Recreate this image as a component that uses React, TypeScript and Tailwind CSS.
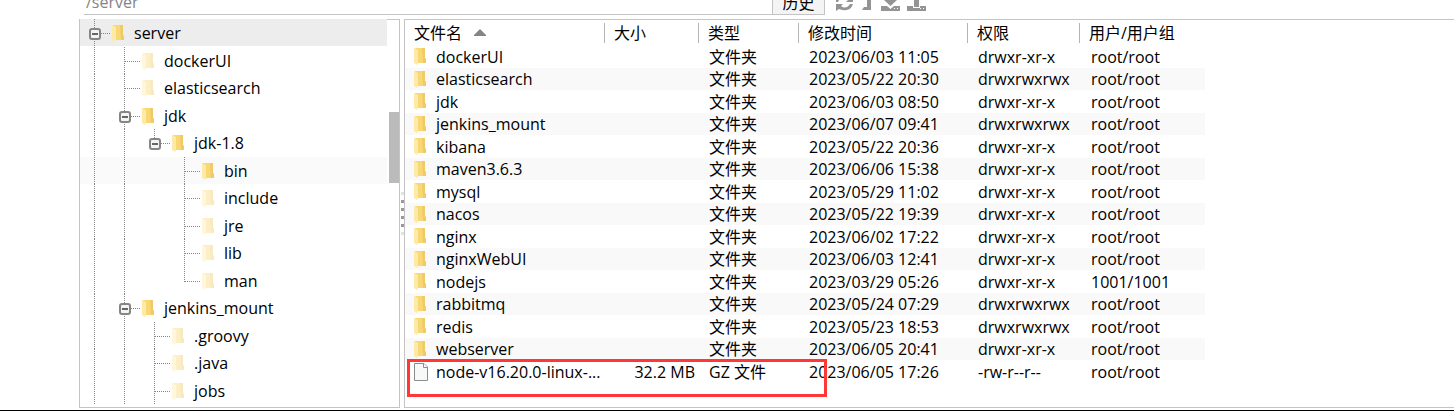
import React from "react";

type Node = {
  name: string;
  guides: boolean[];
  last?: boolean;
  open?: boolean;
  faded?: boolean;
  selected?: "root" | "item";
};

const tree: Node[] = [
  { name: "server", guides: [], open: true, selected: "root" },
  { name: "dockerUI", guides: [true], faded: true },
  { name: "elasticsearch", guides: [true], faded: true },
  { name: "jdk", guides: [true], open: true },
  { name: "jdk-1.8", guides: [true, true], open: true, last: true },
  { name: "bin", guides: [true, true, false], selected: "item" },
  { name: "include", guides: [true, true, false], faded: true },
  { name: "jre", guides: [true, true, false], faded: true },
  { name: "lib", guides: [true, true, false], faded: true },
  { name: "man", guides: [true, true, false], faded: true, last: true },
  { name: "jenkins_mount", guides: [true], open: true },
  { name: ".groovy", guides: [true, true], faded: true },
  { name: ".java", guides: [true, true], faded: true },
  { name: "jobs", guides: [true, true], faded: true },
];

type Entry = { name: string; size?: string; type: string; time: string; perm: string; owner: string };

const dir = (name: string, time: string, perm = "drwxr-xr-x", owner = "root/root"): Entry => ({
  name,
  type: "文件夹",
  time,
  perm,
  owner,
});

const entries: Entry[] = [
  dir("dockerUI", "2023/06/03 11:05"),
  dir("elasticsearch", "2023/05/22 20:30", "drwxrwxrwx"),
  dir("jdk", "2023/06/03 08:50"),
  dir("jenkins_mount", "2023/06/07 09:41", "drwxrwxrwx"),
  dir("kibana", "2023/05/22 20:36"),
  dir("maven3.6.3", "2023/06/06 15:38"),
  dir("mysql", "2023/05/29 11:02"),
  dir("nacos", "2023/05/22 19:39"),
  dir("nginx", "2023/06/02 17:22"),
  dir("nginxWebUI", "2023/06/03 12:41"),
  dir("nodejs", "2023/03/29 05:26", "drwxr-xr-x", "1001/1001"),
  dir("rabbitmq", "2023/05/24 07:29", "drwxrwxrwx"),
  dir("redis", "2023/05/23 18:53", "drwxrwxrwx"),
  dir("webserver", "2023/06/05 20:41"),
  { name: "node-v16.20.0-linux-...", size: "32.2 MB", type: "GZ 文件", time: "2023/06/05 17:26", perm: "-rw-r--r--", owner: "root/root" },
];

function Folder({ faded }: { faded?: boolean }) {
  return (
    <svg width="12" height="17" viewBox="0 0 12 17" className={faded ? "shrink-0 opacity-40" : "shrink-0"} aria-hidden="true">
      <path d="M1 0H11V10L12 11V15H3Z" fill="#f8d775" />
      <path d="M8 0H11V10L12 11V15H9Z" fill="#f0ca66" />
      <path d="M0 0L4 2V15L3 17L0 15Z" fill="#ffe9a6" />
    </svg>
  );
}

function FileIcon() {
  return (
    <svg width="14" height="18" viewBox="0 0 14 18" className="shrink-0" aria-hidden="true">
      <path d="M.5 .5H10L13.5 4V17.5H.5Z" fill="#f7f8f8" stroke="#8c8c8c" />
      <path d="M9.5 .5V4.5H13.5" fill="#fff" stroke="#8c8c8c" />
    </svg>
  );
}

function Guide({ vertical, branch, last, open }: { vertical?: boolean; branch?: boolean; last?: boolean; open?: boolean }) {
  return (
    <svg width="30" height="28" viewBox="0 0 30 28" className="shrink-0 overflow-hidden" aria-hidden="true">
      <g stroke="#858585" strokeDasharray="1 1" shapeRendering="crispEdges">
        {(vertical || branch) && <path d={last ? "M14.5 0V15" : "M14.5 0V28"} />}
        {branch && <path d="M15 14.5H30" />}
      </g>
      {open && (
        <>
          <rect x="10" y="10" width="10" height="10" rx="2" fill="#f4f4f4" stroke="#858585" strokeWidth="2" />
          <path d="M12 15H18" stroke="#666666" strokeWidth="2" />
        </>
      )}
    </svg>
  );
}

function TreeRow({ node }: { node: Node }) {
  const tone = node.selected === "root" ? "bg-[#ededed]" : node.selected === "item" ? "bg-[#fafafa]" : "";
  return (
    <li className="h-7 even:h-[27px]">
      <button type="button" className={`flex h-[27px] w-full items-start text-left ${tone}`}>
        {node.guides.map((g, i) => (
          <Guide key={i} vertical={g} />
        ))}
        <Guide branch last={node.last} open={node.open} />
        <span className="flex h-7 items-center gap-2.5 pl-0.5 leading-7">
          <Folder faded={node.faded} />
          <span>{node.name}</span>
        </span>
      </button>
    </li>
  );
}

function Toolbar() {
  return (
    <div className="flex items-start gap-[9px] pl-[11px] text-[#949494]">
      <button type="button" aria-label="刷新">
        <svg width="17" height="12" viewBox="0 0 17 12" fill="currentColor" aria-hidden="true">
          <path d="M0 0H3L2 2H0Z" />
          <path d="M17 0V2H10L12 0Z" />
          <path d="M0 4H7L5 6Q10 10 14 4H17Q14 13 3 9L0 11Z" />
        </svg>
      </button>
      <button type="button" aria-label="返回上级">
        <svg width="9" height="12" viewBox="0 0 9 12" fill="currentColor" aria-hidden="true">
          <path d="M5 0H9V10H0L2 7H5Z" />
        </svg>
      </button>
      <button type="button" aria-label="下载">
        <svg width="19" height="12" viewBox="0 0 19 12" fill="currentColor" className="ml-px" aria-hidden="true">
          <path d="M3 0H16L9.500 6Z" />
          <path d="M0 6H6L9.500 9L13 6H19V11H0Z" />
          <path d="M13 8H14V9H13ZM16 8H17V9H16Z" fill="#fff" />
        </svg>
      </button>
      <button type="button" aria-label="上传" className="-ml-0.5">
        <svg width="19" height="12" viewBox="0 0 19 12" fill="currentColor" aria-hidden="true">
          <path d="M7 0H12V7H7Z" />
          <path d="M0 6H6V8H13V6H19V11H0Z" />
          <path d="M13 8H14V9H13ZM16 8H17V9H16Z" fill="#fff" />
        </svg>
      </button>
    </div>
  );
}

const headers = ["文件名", "大小", "类型", "修改时间", "权限", "用户/用户组"];

export default function App() {
  return (
    <div className="flex flex-col border-b border-black bg-white pb-0.5 font-['Open_Sans','Noto_Sans_CJK_SC',sans-serif] text-[16px] text-black">
      <header className="flex h-[19px] items-start pl-[84px]">
        <div className="flex h-[15px] w-[741px] items-end overflow-hidden border-b border-[#c4c4c4]">
          <input aria-label="路径" defaultValue="/server" className="h-6 min-w-0 flex-1 bg-transparent pl-0.5 text-[#858585] outline-none" />
          <button type="button" className="h-6 w-[53px] shrink-0 border border-b-0 border-[#c4c4c4] bg-[#f4f4f4] leading-6">
            历史
          </button>
        </div>
        <Toolbar />
      </header>
      <main className="flex">
        <nav aria-label="目录" className="flex h-[389px] w-[400px] shrink-0 pl-[79px]">
          <div className="flex w-full overflow-hidden border border-t-0 border-[#c4c4c4]">
            <ul className="flex-1">
              {tree.map((n) => (
                <TreeRow key={n.name} node={n} />
              ))}
            </ul>
            <div className="w-3 shrink-0 border-t border-[#c4c4c4] pt-[92px] pl-0.5">
              <div className="h-[71px] bg-[#bbbbbb]" />
            </div>
          </div>
        </nav>
        <div className="flex w-1 shrink-0 flex-col items-center justify-center gap-[5px]">
          <i className="size-[3px] bg-[#e2e2e2]" />
          <i className="size-[3px] bg-[#999999]" />
          <i className="size-[3px] bg-[#999999]" />
          <i className="size-[3px] bg-[#999999]" />
          <i className="size-[3px] bg-[#999999]" />
          <i className="size-[3px] bg-[#e2e2e2]" />
        </div>
        <section className="relative min-w-0 flex-1 border-y border-l border-[#c4c4c4]">
          <table className="w-[800px] table-fixed border-collapse whitespace-nowrap">
            <colgroup>
              <col className="w-[200px]" />
              <col className="w-[94px]" />
              <col className="w-[100px]" />
              <col className="w-[169px]" />
              <col className="w-[112px]" />
              <col />
            </colgroup>
            <thead>
              <tr className="h-[25px]">
                {headers.map((h, i) => (
                  <th key={h} scope="col" className="p-0 text-left font-normal">
                    <span className={`flex h-5 items-center pl-[9px] ${i < 5 ? "border-r border-[#b4b4b4]" : ""}`}>
                      {h}
                      {i === 0 && (
                        <svg width="12" height="7" viewBox="0 0 12 7" className="ml-3" aria-hidden="true">
                          <path d="M6 0L12 6V7H0V6Z" fill="#858585" />
                        </svg>
                      )}
                    </span>
                  </th>
                ))}
              </tr>
            </thead>
            <tbody>
              {entries.map((e) => (
                <tr key={e.name} className="h-[23px] leading-[22px] even:h-[22px] even:bg-[#f9f9f9]">
                  <td className="p-0">
                    <span className="flex h-[22px] items-center pl-[9px]">
                      <span className="flex w-[22px] shrink-0 items-center">{e.size ? <FileIcon /> : <Folder />}</span>
                      <span>{e.name}</span>
                    </span>
                  </td>
                  <td className="p-0 pr-1 text-right">{e.size}</td>
                  <td className="p-0 pl-[10px]">{e.type}</td>
                  <td className="p-0 pl-[10px]">{e.time}</td>
                  <td className="p-0 pl-[10px]">{e.perm}</td>
                  <td className="p-0 pl-[11px]">{e.owner}</td>
                </tr>
              ))}
            </tbody>
          </table>
          <div className="pointer-events-none absolute top-[339px] left-0.5 h-[38px] w-[420px] border-[3px] border-[#ff3837]" />
        </section>
      </main>
    </div>
  );
}
